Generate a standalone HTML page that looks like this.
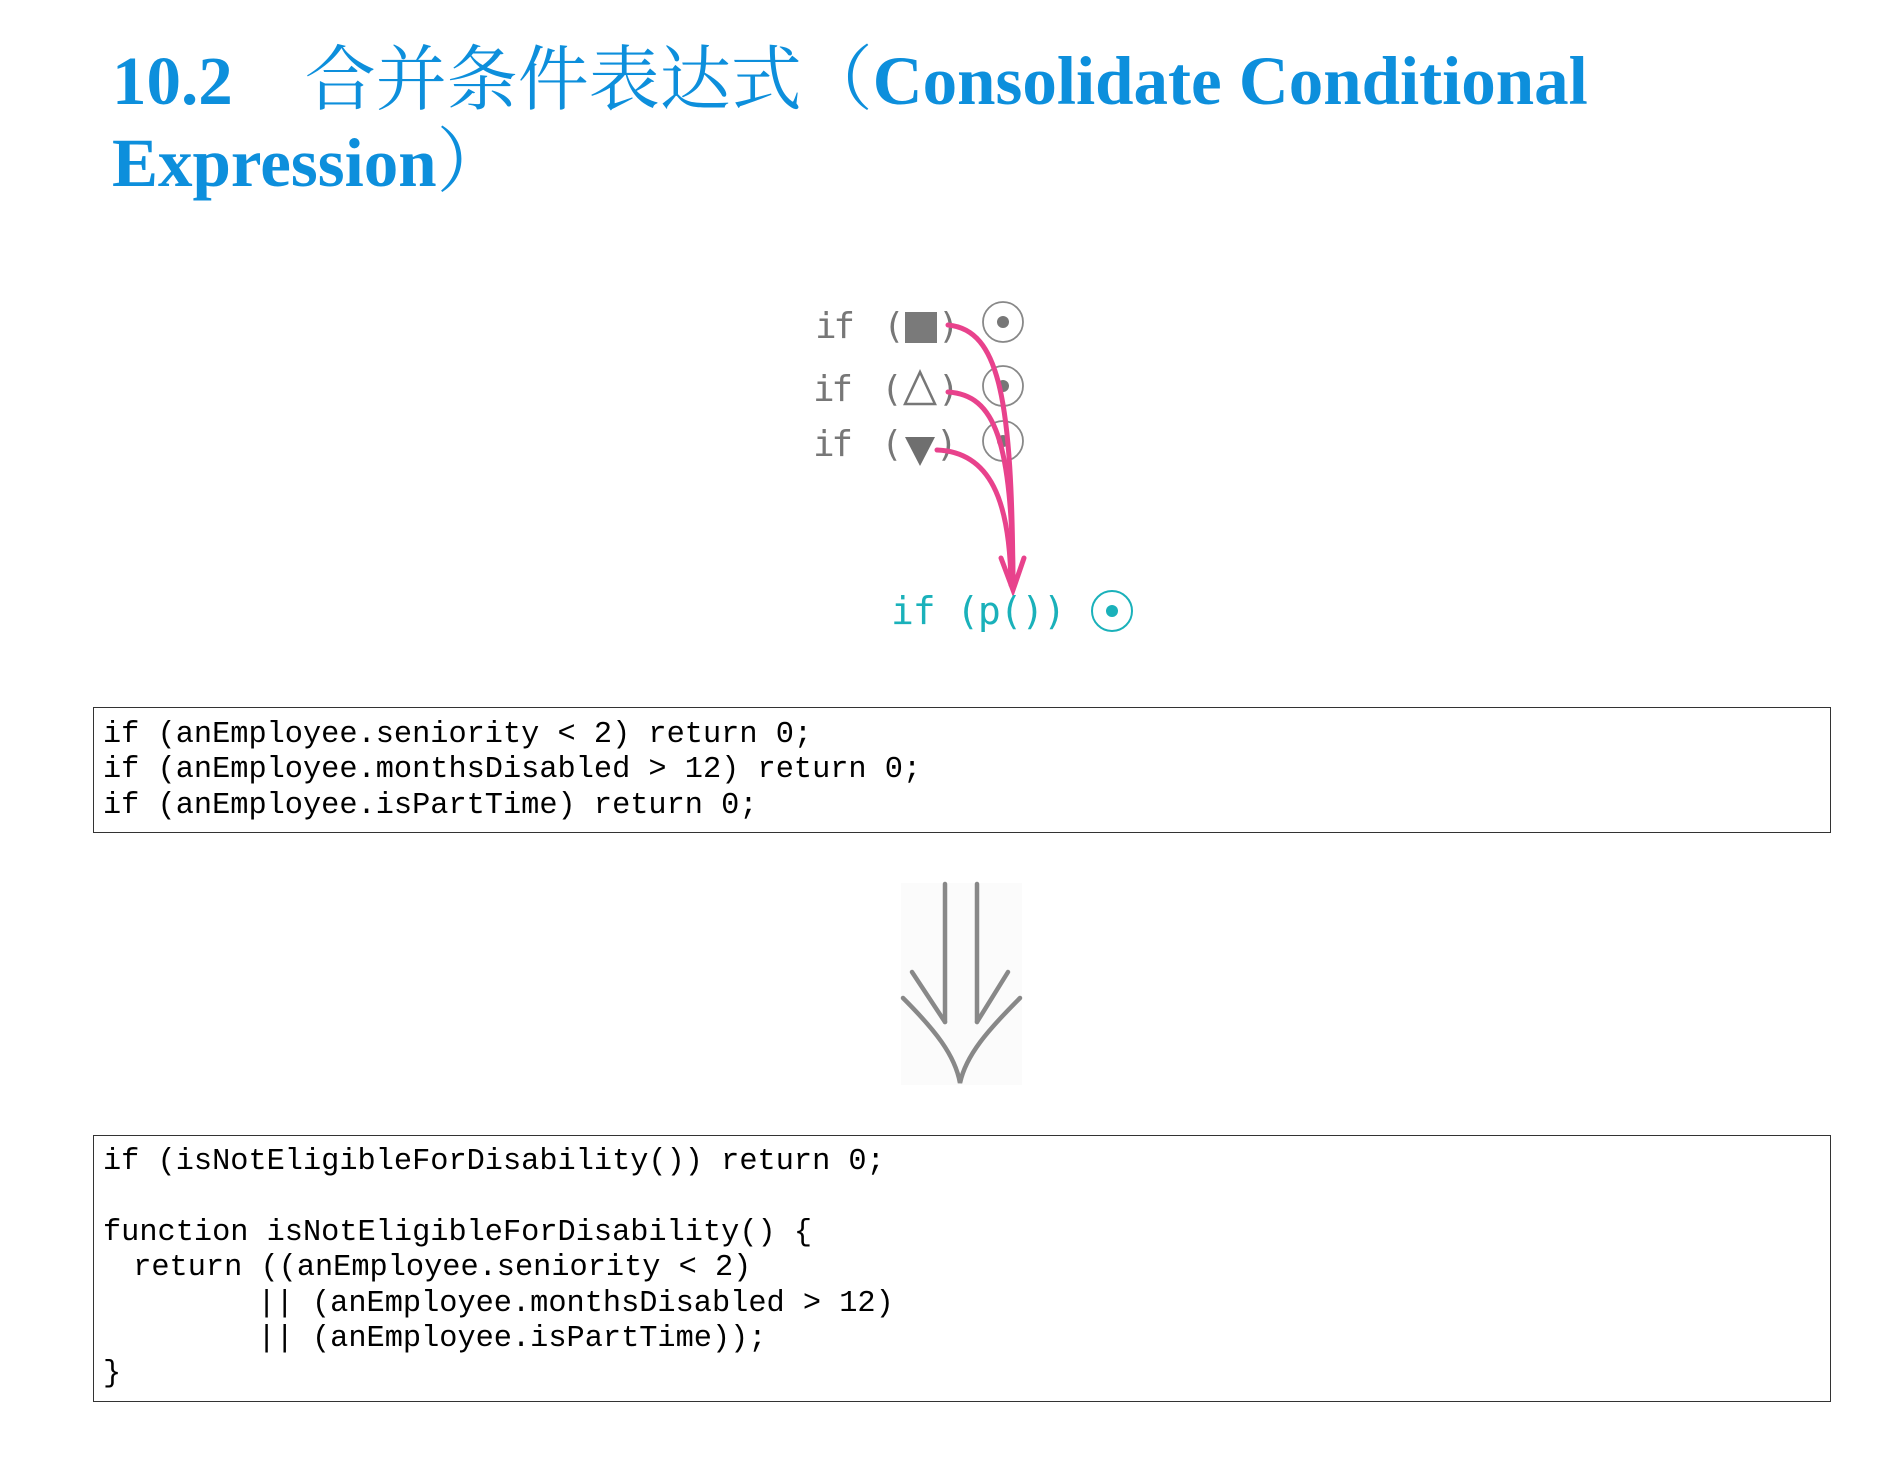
<!DOCTYPE html>
<html><head><meta charset="utf-8"><style>
body{margin:0;width:1896px;height:1458px;background:#fff;position:relative;overflow:hidden}
.t{position:absolute;left:112px;font-family:"Liberation Serif","Noto Serif CJK SC",serif;font-weight:bold;font-size:69px;color:#0d8fdc;white-space:pre;line-height:1}
.cj{font-weight:normal;font-family:"Noto Serif CJK SC",serif;font-size:71px}
.box{position:absolute;left:93px;width:1738px;border:1.5px solid #333;box-sizing:border-box}
pre{margin:0;position:absolute;left:9px;font-family:"Liberation Mono",monospace;font-size:30.3px;line-height:35.4px;color:#000}
.i1{padding-left:12px}.i2{padding-left:9px}
</style></head><body>
<div class="t" style="top:39px">10.2<span style="display:inline-block;width:72px"></span><span class="cj">合并条件表达式（</span>Consolidate Conditional</div>
<div class="t" style="top:121px">Expression<span class="cj">）</span></div>

<svg style="position:absolute;left:0;top:0" width="1896" height="1458">
 <g font-family="DejaVu Sans Mono,monospace" font-size="36" fill="#777">
  <text x="815" y="338" textLength="40">if</text>
  <text x="883" y="338">(</text><text x="938" y="338">)</text>
  <text x="813" y="401" textLength="40">if</text>
  <text x="881" y="401">(</text><text x="938" y="401">)</text>
  <text x="813" y="456" textLength="40">if</text>
  <text x="881" y="456">(</text><text x="936" y="456">)</text>
 </g>
 <rect x="905" y="312" width="32" height="31" fill="#7a7a7a"/>
 <polygon points="920,372 905,404 935,404" fill="none" stroke="#777" stroke-width="2.5"/>
 <polygon points="905,437 935,437 920,466" fill="#6f6f6f"/>
 <g fill="none" stroke="#888" stroke-width="1.8">
  <circle cx="1003" cy="322" r="20"/><circle cx="1003" cy="386" r="20"/><circle cx="1003" cy="441" r="20"/>
 </g>
 <g fill="#777"><circle cx="1003" cy="322" r="6"/><circle cx="1003" cy="386" r="6"/><circle cx="1003" cy="441" r="6"/></g>
 <g fill="none" stroke="#e8428c" stroke-width="5" stroke-linecap="round">
  <path d="M948,325 C1000,330 1012,400 1013,585"/>
  <path d="M948,392 C995,395 1012,440 1013,585"/>
  <path d="M937,450 C990,452 1010,500 1011,585"/>
  <path d="M1001,558 L1013,590 L1024,558"/>
 </g>
 <text x="891" y="624" font-family="DejaVu Sans Mono,monospace" font-size="38" fill="#1ab1ba" textLength="175">if (p())</text>
 <circle cx="1112" cy="611" r="20" fill="none" stroke="#1ab1ba" stroke-width="2"/>
 <circle cx="1112" cy="611" r="6" fill="#1ab1ba"/>
 <rect x="901" y="883" width="121" height="202" fill="#fbfbfb"/>
 <g fill="none" stroke="#888" stroke-width="4.5" stroke-linecap="round">
  <path d="M945,884 V1022 M977,884 V1022"/>
  <path d="M912,972 L945,1022 M1008,972 L977,1022"/>
  <path d="M903,998 C935,1030 955,1055 960,1083 C966,1055 988,1030 1020,998"/>
 </g>
</svg>

<div class="box" style="top:707px;height:126px"><pre style="top:10px">if (anEmployee.seniority &lt; 2) return 0;
if (anEmployee.monthsDisabled &gt; 12) return 0;
if (anEmployee.isPartTime) return 0;</pre></div>

<div class="box" style="top:1135px;height:267px"><pre style="top:9px">if (isNotEligibleForDisability()) return 0;

function isNotEligibleForDisability() {
 <span class="i1">return ((anEmployee.seniority &lt; 2)</span>
        <span class="i2">|| (anEmployee.monthsDisabled &gt; 12)</span>
        <span class="i2">|| (anEmployee.isPartTime));</span>
}</pre></div>
</body></html>
